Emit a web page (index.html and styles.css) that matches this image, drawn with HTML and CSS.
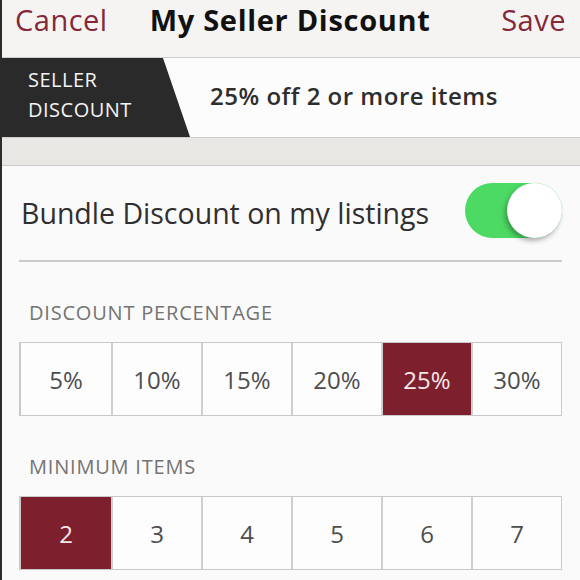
FILE: index.html
```html
<!DOCTYPE html>
<html lang="en">
<head>
  <meta charset="UTF-8" />
  <meta name="viewport" content="width=device-width, initial-scale=1.0" />
  <title>My Seller Discount</title>
  <link rel="stylesheet" href="styles.css">
</head>
<body>
  <div class="page">

    <div class="navbar">
      <span class="nav-link">Cancel</span>
      <span class="nav-title">My Seller Discount</span>
      <span class="nav-link save">Save</span>
    </div>

    <div class="banner">
      <div class="banner-tab">SELLER<br>DISCOUNT</div>
      <div class="banner-text">25% off 2 or more items</div>
    </div>

    <div class="spacer"></div>

    <div class="content">
      <div class="toggle-row">
        <span class="toggle-label">Bundle Discount on my listings</span>
        <div class="switch on"><div class="knob"></div></div>
      </div>

      <div class="section-label">DISCOUNT PERCENTAGE</div>
      <div class="choices">
        <div class="choice">5%</div>
        <div class="choice">10%</div>
        <div class="choice">15%</div>
        <div class="choice">20%</div>
        <div class="choice selected">25%</div>
        <div class="choice">30%</div>
      </div>

      <div class="section-label">MINIMUM ITEMS</div>
      <div class="choices">
        <div class="choice selected">2</div>
        <div class="choice">3</div>
        <div class="choice">4</div>
        <div class="choice">5</div>
        <div class="choice">6</div>
        <div class="choice">7</div>
      </div>
    </div>

  </div>
</body>
</html>
```

FILE: styles.css
```css
* {
  box-sizing: border-box;
  font-family: "Open Sans", "Liberation Sans", sans-serif;
}
html, body {
  margin: 0;
  padding: 0;
  width: 100%;
  height: 100%;
  overflow: hidden;
  background: #fbfafa;
}
.page {
  border-left: 2px solid #2b2b2b;
  min-height: 100%;
}
.navbar {
  height: 58px;
  display: flex;
  align-items: flex-start;
  padding: 0 14px 0 13px;
  background: #f5f4f3;
  border-bottom: 1px solid #cfcdcb;
}
.nav-link {
  font-size: 29px;
  line-height: 40px;
  letter-spacing: 0.5px;
  color: #84283a;
}
.nav-link.save {
  margin-left: auto;
}
.nav-title {
  margin-left: 42px;
  font-size: 29px;
  line-height: 40px;
  font-weight: 700;
  letter-spacing: 0.7px;
  color: #111;
}
.banner {
  height: 80px;
  display: flex;
  align-items: center;
  background: #fdfcfc;
  border-bottom: 1px solid #cfcdcb;
}
.banner-tab {
  align-self: stretch;
  width: 188px;
  padding: 7px 0 0 26px;
  background: #2a2a2a;
  color: #f4f4f4;
  font-size: 20px;
  line-height: 30px;
  letter-spacing: 0.5px;
  clip-path: polygon(0 0, 161px 0, 188px 100%, 0 100%);
}
.banner-text {
  margin: -4px 0 0 20px;
  font-size: 24px;
  font-weight: 600;
  letter-spacing: 0.5px;
  color: #2e2e2e;
}
.spacer {
  height: 28px;
  background: #e9e7e3;
  border-bottom: 1px solid #cbc9c6;
}
.content {
  padding: 0 18px 0 17px;
}
.toggle-row {
  height: 96px;
  display: flex;
  justify-content: space-between;
  align-items: center;
  border-bottom: 2px solid #cbcbcb;
}
.toggle-label {
  padding: 0 0 0 2px;
  font-size: 28.5px;
  color: #2f2f2f;
}
.switch {
  position: relative;
  width: 97px;
  height: 55px;
  border-radius: 28px;
  background: #4cd964;
  margin-top: -6px;
}
.knob {
  position: absolute;
  top: 0;
  right: 0;
  width: 55px;
  height: 55px;
  border-radius: 50%;
  background: #fff;
  box-shadow: -2px 3px 5px rgba(0, 0, 0, 0.3);
}
.section-label {
  height: 80px;
  padding: 37px 0 0 10px;
  font-size: 20px;
  letter-spacing: 0.8px;
  color: #737373;
}
.choices {
  display: grid;
  grid-template-columns: repeat(6, 1fr);
  height: 74px;
  border: 1px solid #c9c9c9;
  border-left-width: 2px;
  background: #fdfdfd;
}
.choice {
  display: flex;
  align-items: center;
  justify-content: center;
  border-left: 2px solid #cfcfcf;
  font-size: 24px;
  color: #4d4d4d;
}
.choice:first-child {
  border-left: none;
}
.choice.selected {
  background: #7e1f2e;
  color: #f4e8ea;
}
```
